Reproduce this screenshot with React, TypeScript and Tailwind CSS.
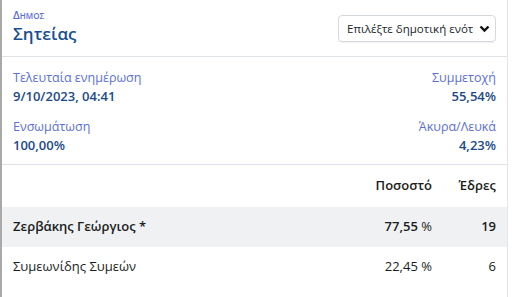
import React from "react";

type Row = { name: string; pct: string; seats: number; lead?: boolean };

const rows: Row[] = [
  { name: "Ζερβάκης Γεώργιος *", pct: "77,55", seats: 19, lead: true },
  { name: "Συμεωνίδης Συμεών", pct: "22,45", seats: 6 },
];

const Stat = ({ label, value, right }: { label: string; value: string; right?: boolean }) => (
  <div className={right ? "text-right" : ""}>
    <div className="text-[12.5px] leading-[19px] text-[#5b6fd3]">{label}</div>
    <div className="text-[13px] leading-[19px] font-semibold text-[#1b4a87]">{value}</div>
  </div>
);

export default function App() {
  return (
    <div
      className="w-[508px] h-[297px] bg-white border-l-2 border-r border-l-[#a9a9a9] border-r-[#e4e6e9] overflow-hidden"
      style={{ fontFamily: '"Open Sans", "Noto Sans", sans-serif' }}
    >
      <div className="flex items-center justify-between pl-[11px] pr-[11px] h-[57px] border-b border-[#dfe2e6]">
        <div className="flex flex-col">
          <div className="text-[11px] leading-[10px] mb-[3px] -mt-[2px] font-semibold [font-variant:small-caps] text-[#5b6fd3]">Δημος</div>
          <div className="text-[17px] leading-[22px] font-semibold text-[#174e93]">Σητείας</div>
        </div>
        <div className="flex items-center justify-between w-[158px] h-[27px] mt-[1px] pl-[8px] pr-[5px] border border-[#d5d9de] rounded-[4px] shadow-[0_1px_1px_rgba(0,0,0,0.06)]">
          <span className="text-[11.5px] text-[#212529] whitespace-nowrap overflow-hidden">Επιλέξτε δημοτική ενότ</span>
          <svg width="11" height="8" viewBox="0 0 11 8" className="shrink-0">
            <path d="M1.5 1.5 L5.5 5.5 L9.5 1.5" fill="none" stroke="#111" strokeWidth="2.4" />
          </svg>
        </div>
      </div>

      <div className="flex flex-col gap-[11px] px-[11px] pt-[11px] pb-[9px] border-b border-[#dfe2e6]">
        <div className="flex justify-between">
          <Stat label="Τελευταία ενημέρωση" value="9/10/2023, 04:41" />
          <Stat label="Συμμετοχή" value="55,54%" right />
        </div>
        <div className="flex justify-between">
          <Stat label="Ενσωμάτωση" value="100,00%" />
          <Stat label="Άκυρα/Λευκά" value="4,23%" right />
        </div>
      </div>

      <div className="text-[13px] text-[#1a1d20]">
        <div className="grid grid-cols-[1fr_90px_64px] h-[42px] items-center px-[11px] font-semibold">
          <span />
          <span className="text-right">Ποσοστό</span>
          <span className="text-right">Έδρες</span>
        </div>
        {rows.map((r) => (
          <div
            key={r.name}
            className={`grid grid-cols-[1fr_90px_64px] h-[40px] items-center px-[11px] ${r.lead ? "bg-[#f0f1f3] font-semibold" : ""}`}
          >
            <span>{r.name}</span>
            <span className="text-right">
              {r.pct} <span className="font-normal">%</span>
            </span>
            <span className="text-right">{r.seats}</span>
          </div>
        ))}
      </div>
    </div>
  );
}
